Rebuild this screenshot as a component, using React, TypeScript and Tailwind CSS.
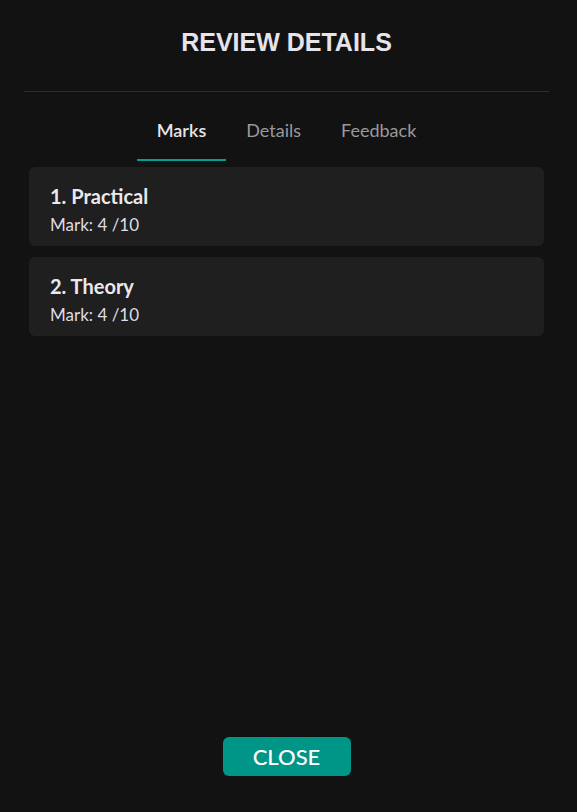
const marks = [
  { id: 1, title: "Practical", mark: 4, total: 10 },
  { id: 2, title: "Theory", mark: 4, total: 10 },
];

const tabs = ["Marks", "Details", "Feedback"];

export default function App() {
  const active = "Marks";

  return (
    <div className="flex h-[812px] flex-col bg-[#121212] pr-[4px] font-['Lato',sans-serif]">
      <h1 className="pt-[28px] text-center font-['Liberation_Sans',Arial,sans-serif] text-[25px] font-bold leading-[29px] text-[#e6e4ea]">
        REVIEW DETAILS
      </h1>
      <div className="mx-[24px] mt-[34px] h-px bg-[#2c2c2c]" />
      <div className="mt-[27px] flex justify-center">
        {tabs.map((tab) => (
          <button
            key={tab}
            className={
              tab === active
                ? "border-b-2 border-[#00a08e] px-[20px] pb-[18px] text-[18px] font-semibold leading-[22px] text-[#e6e4ea]"
                : "border-b-2 border-transparent px-[20px] pb-[18px] text-[18px] leading-[22px] text-[#9a989e]"
            }
          >
            {tab}
          </button>
        ))}
      </div>
      <div className="mx-[29px] mt-[6px] flex flex-col gap-[11px]">
        {marks.map((item) => (
          <div key={item.id} className="flex h-[79px] flex-col rounded-[6px] bg-[#1f1f1f] px-[21px] pt-[15px]">
            <div className="text-[20px] font-bold leading-[28px] text-[#ebe9ee]">
              {item.id}. {item.title}
            </div>
            <div className="text-[17px] leading-[30px] text-[#dedce2]">
              Mark: {item.mark} /{item.total}
            </div>
          </div>
        ))}
      </div>
      <div className="mb-[36px] mt-auto flex justify-center">
        <button className="h-[39px] w-[128px] rounded-[6px] bg-[#009687] text-[22px] font-medium text-white">
          CLOSE
        </button>
      </div>
    </div>
  );
}
